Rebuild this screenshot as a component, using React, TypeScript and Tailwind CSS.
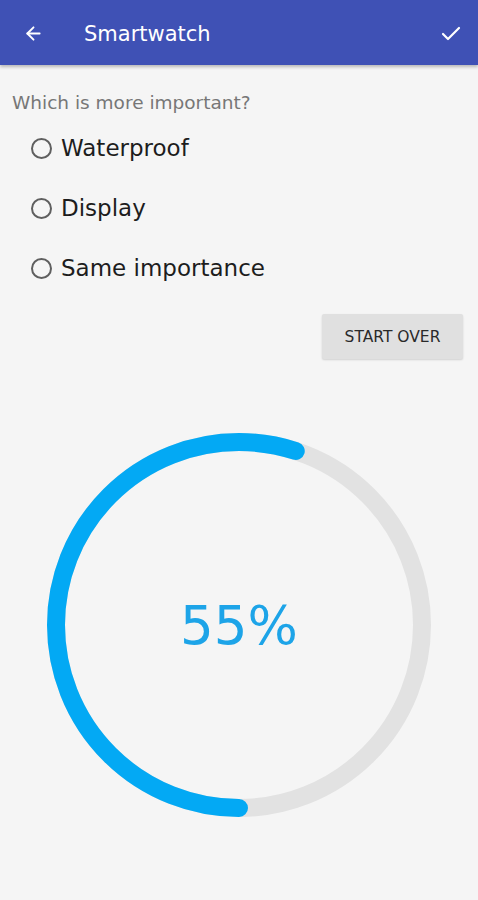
import { ArrowLeft, Check } from 'lucide-react';

const options = ['Waterproof', 'Display', 'Same importance'];

function ProgressRing({ percent }: { percent: number }) {
  const r = 183;
  const c = 2 * Math.PI * r;
  const len = (percent / 100) * c;
  return (
    <div className="relative w-[400px] h-[400px]">
      <svg width="400" height="400" viewBox="0 0 400 400">
        <circle cx="200" cy="200" r={r} fill="none" stroke="#e2e2e2" strokeWidth="18" />
        {/* start at 6 o'clock, run clockwise via 9 o'clock */}
        <circle
          cx="200"
          cy="200"
          r={r}
          fill="none"
          stroke="#03a9f4"
          strokeWidth="18"
          strokeLinecap="round"
          strokeDasharray={`${len} ${c}`}
          transform="rotate(90 200 200)"
        />
      </svg>
      <div className="absolute inset-0 flex items-center justify-center">
        <span className="text-[53px] text-[#1da4e8] leading-none">{percent}%</span>
      </div>
    </div>
  );
}

export default function App() {
  return (
    <div className="min-h-[900px] bg-[#f5f5f5] font-['DejaVu_Sans','Noto_Sans',sans-serif]">
      <header className="h-[65px] bg-[#3f51b5] flex items-center shadow-[0_2px_3px_rgba(0,0,0,0.25)] relative">
        <ArrowLeft className="ml-[23px] mt-[2px] w-[21px] h-[21px] text-white" strokeWidth={2.2} />
        <h1 className="ml-[40px] mt-[4px] text-[21px] text-white flex-1">Smartwatch</h1>
        <Check className="mr-[15px] mt-[2px] w-[24px] h-[24px] text-white" strokeWidth={2.2} />
      </header>

      <p className="pt-[26px] pl-[12px] text-[18.5px] leading-[24px] text-[#777]">Which is more important?</p>

      <div className="mt-[3px]">
        {options.map((o) => (
          <label key={o} className="h-[60px] flex items-center pl-[31px] cursor-pointer">
            <span className="w-[21px] h-[21px] rounded-full border-2 border-[#5f5f5f]" />
            <span className="ml-[9px] text-[23px] text-[#1d1d1d]">{o}</span>
          </label>
        ))}
      </div>

      <div className="flex justify-end pr-[15px] mt-[16px]">
        <button className="w-[141px] h-[45px] pt-[3px] bg-[#e0e0e0] text-[15.5px] text-[#2a2a2a] rounded-[2px] shadow-[0_1px_2px_rgba(0,0,0,0.15)]">
          START OVER
        </button>
      </div>

      <div className="flex justify-center mt-[66px]">
        <ProgressRing percent={55} />
      </div>
    </div>
  );
}
